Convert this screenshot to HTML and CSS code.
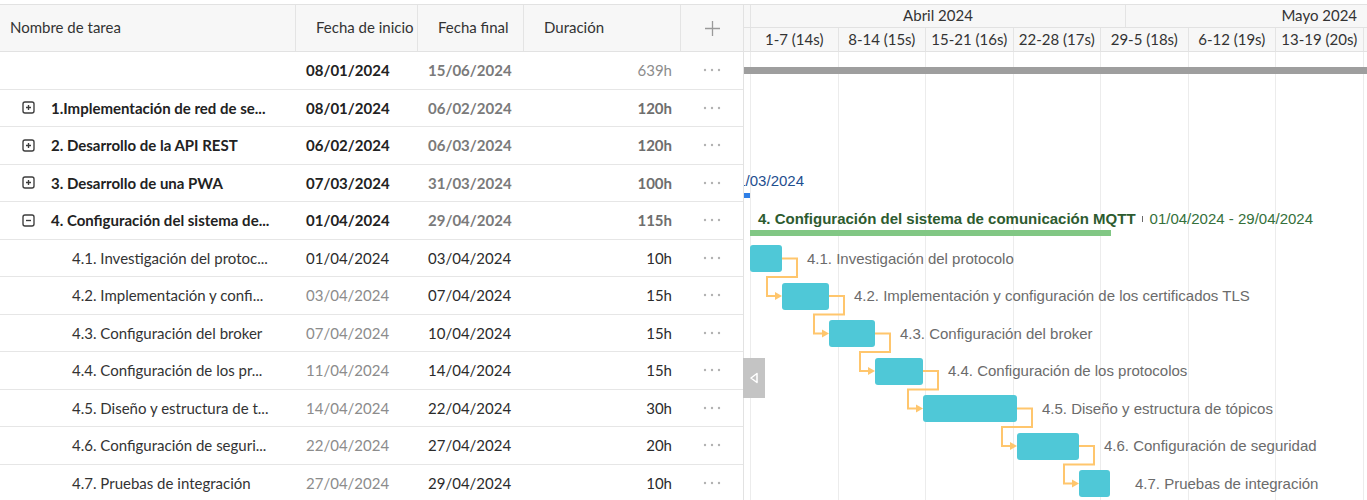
FILE: index.html
```html
<!DOCTYPE html>
<html lang="es">
<head>
<meta charset="utf-8">
<title>Gantt</title>
<link rel="stylesheet" href="styles.css">
</head>
<body>
<div class="app">
  <div class="grid">
    <div class="head">
      <div class="hc col-name">Nombre de tarea</div>
      <div class="hc col-start">Fecha de inicio</div>
      <div class="hc col-end">Fecha final</div>
      <div class="hc col-dur">Duración</div>
      <div class="hc col-add"><svg width="17" height="17" viewBox="0 0 17 17"><path d="M8.5 1v15M1 8.5h15" stroke="#9a9a9a" stroke-width="1.3" fill="none"/></svg></div>
    </div>
    <div class="body">
      <div class="row">
        <div class="cell col-name"></div>
        <div class="cell col-start b dark">08/01/2024</div>
        <div class="cell col-end b grey">15/06/2024</div>
        <div class="cell col-dur light">639h</div>
        <div class="cell col-add"><svg class="dots" width="18" height="4" viewBox="0 0 18 4"><circle cx="2" cy="2" r="1.2"/><circle cx="9" cy="2" r="1.2"/><circle cx="16" cy="2" r="1.2"/></svg></div>
      </div>
      <div class="row">
        <div class="cell col-name parent"><svg class="tog" width="13" height="13" viewBox="0 0 13 13"><rect x="1" y="1" width="11" height="11" rx="2"/><path d="M4 6.5h5M6.5 4v5"/></svg><span class="b dark">1.Implementación de red de se...</span></div>
        <div class="cell col-start b dark">08/01/2024</div>
        <div class="cell col-end b grey">06/02/2024</div>
        <div class="cell col-dur b mid">120h</div>
        <div class="cell col-add"><svg class="dots" width="18" height="4" viewBox="0 0 18 4"><circle cx="2" cy="2" r="1.2"/><circle cx="9" cy="2" r="1.2"/><circle cx="16" cy="2" r="1.2"/></svg></div>
      </div>
      <div class="row">
        <div class="cell col-name parent"><svg class="tog" width="13" height="13" viewBox="0 0 13 13"><rect x="1" y="1" width="11" height="11" rx="2"/><path d="M4 6.5h5M6.5 4v5"/></svg><span class="b dark">2. Desarrollo de la API REST</span></div>
        <div class="cell col-start b dark">06/02/2024</div>
        <div class="cell col-end b grey">06/03/2024</div>
        <div class="cell col-dur b mid">120h</div>
        <div class="cell col-add"><svg class="dots" width="18" height="4" viewBox="0 0 18 4"><circle cx="2" cy="2" r="1.2"/><circle cx="9" cy="2" r="1.2"/><circle cx="16" cy="2" r="1.2"/></svg></div>
      </div>
      <div class="row">
        <div class="cell col-name parent"><svg class="tog" width="13" height="13" viewBox="0 0 13 13"><rect x="1" y="1" width="11" height="11" rx="2"/><path d="M4 6.5h5M6.5 4v5"/></svg><span class="b dark">3. Desarrollo de una PWA</span></div>
        <div class="cell col-start b dark">07/03/2024</div>
        <div class="cell col-end b grey">31/03/2024</div>
        <div class="cell col-dur b mid">100h</div>
        <div class="cell col-add"><svg class="dots" width="18" height="4" viewBox="0 0 18 4"><circle cx="2" cy="2" r="1.2"/><circle cx="9" cy="2" r="1.2"/><circle cx="16" cy="2" r="1.2"/></svg></div>
      </div>
      <div class="row">
        <div class="cell col-name parent"><svg class="tog" width="13" height="13" viewBox="0 0 13 13"><rect x="1" y="1" width="11" height="11" rx="2"/><path d="M4 6.5h5"/></svg><span class="b dark">4. Configuración del sistema de...</span></div>
        <div class="cell col-start b dark">01/04/2024</div>
        <div class="cell col-end b grey">29/04/2024</div>
        <div class="cell col-dur b mid">115h</div>
        <div class="cell col-add"><svg class="dots" width="18" height="4" viewBox="0 0 18 4"><circle cx="2" cy="2" r="1.2"/><circle cx="9" cy="2" r="1.2"/><circle cx="16" cy="2" r="1.2"/></svg></div>
      </div>
      <div class="row">
        <div class="cell col-name child">4.1. Investigación del protoc...</div>
        <div class="cell col-start">01/04/2024</div>
        <div class="cell col-end">03/04/2024</div>
        <div class="cell col-dur">10h</div>
        <div class="cell col-add"><svg class="dots" width="18" height="4" viewBox="0 0 18 4"><circle cx="2" cy="2" r="1.2"/><circle cx="9" cy="2" r="1.2"/><circle cx="16" cy="2" r="1.2"/></svg></div>
      </div>
      <div class="row">
        <div class="cell col-name child">4.2. Implementación y confi...</div>
        <div class="cell col-start light">03/04/2024</div>
        <div class="cell col-end">07/04/2024</div>
        <div class="cell col-dur">15h</div>
        <div class="cell col-add"><svg class="dots" width="18" height="4" viewBox="0 0 18 4"><circle cx="2" cy="2" r="1.2"/><circle cx="9" cy="2" r="1.2"/><circle cx="16" cy="2" r="1.2"/></svg></div>
      </div>
      <div class="row">
        <div class="cell col-name child">4.3. Configuración del broker</div>
        <div class="cell col-start light">07/04/2024</div>
        <div class="cell col-end">10/04/2024</div>
        <div class="cell col-dur">15h</div>
        <div class="cell col-add"><svg class="dots" width="18" height="4" viewBox="0 0 18 4"><circle cx="2" cy="2" r="1.2"/><circle cx="9" cy="2" r="1.2"/><circle cx="16" cy="2" r="1.2"/></svg></div>
      </div>
      <div class="row">
        <div class="cell col-name child">4.4. Configuración de los pr...</div>
        <div class="cell col-start light">11/04/2024</div>
        <div class="cell col-end">14/04/2024</div>
        <div class="cell col-dur">15h</div>
        <div class="cell col-add"><svg class="dots" width="18" height="4" viewBox="0 0 18 4"><circle cx="2" cy="2" r="1.2"/><circle cx="9" cy="2" r="1.2"/><circle cx="16" cy="2" r="1.2"/></svg></div>
      </div>
      <div class="row">
        <div class="cell col-name child">4.5. Diseño y estructura de t...</div>
        <div class="cell col-start light">14/04/2024</div>
        <div class="cell col-end">22/04/2024</div>
        <div class="cell col-dur">30h</div>
        <div class="cell col-add"><svg class="dots" width="18" height="4" viewBox="0 0 18 4"><circle cx="2" cy="2" r="1.2"/><circle cx="9" cy="2" r="1.2"/><circle cx="16" cy="2" r="1.2"/></svg></div>
      </div>
      <div class="row">
        <div class="cell col-name child">4.6. Configuración de seguri...</div>
        <div class="cell col-start light">22/04/2024</div>
        <div class="cell col-end">27/04/2024</div>
        <div class="cell col-dur">20h</div>
        <div class="cell col-add"><svg class="dots" width="18" height="4" viewBox="0 0 18 4"><circle cx="2" cy="2" r="1.2"/><circle cx="9" cy="2" r="1.2"/><circle cx="16" cy="2" r="1.2"/></svg></div>
      </div>
      <div class="row">
        <div class="cell col-name child">4.7. Pruebas de integración</div>
        <div class="cell col-start light">27/04/2024</div>
        <div class="cell col-end">29/04/2024</div>
        <div class="cell col-dur">10h</div>
        <div class="cell col-add"><svg class="dots" width="18" height="4" viewBox="0 0 18 4"><circle cx="2" cy="2" r="1.2"/><circle cx="9" cy="2" r="1.2"/><circle cx="16" cy="2" r="1.2"/></svg></div>
      </div>
    </div>
  </div>

  <div class="chart">
    <div class="chart-head">
      <div class="scale months">
        <div class="tcell pad"></div>
        <div class="tcell m-apr">Abril 2024</div>
        <div class="tcell m-may">Mayo 2024</div>
      </div>
      <div class="scale weeks">
        <div class="tcell pad"></div>
        <div class="tcell wk">1-7 (14s)</div>
        <div class="tcell wk">8-14 (15s)</div>
        <div class="tcell wk">15-21 (16s)</div>
        <div class="tcell wk">22-28 (17s)</div>
        <div class="tcell wk">29-5 (18s)</div>
        <div class="tcell wk">6-12 (19s)</div>
        <div class="tcell wk">13-19 (20s)</div>
        <div class="tcell wk"></div>
      </div>
    </div>
    <div class="chart-body">
      <div class="cols">
        <div class="col pad"></div>
        <div class="col"></div><div class="col"></div><div class="col"></div><div class="col"></div>
        <div class="col"></div><div class="col"></div><div class="col"></div><div class="col"></div>
      </div>
      <svg class="links" width="623" height="450" viewBox="0 0 623 450">
        <g fill="none" stroke="#ffc66d" stroke-width="2">
          <path d="M38 206.5H53V225H23V244H32"/>
          <path d="M85 244H100V262.5H70V281.5H79"/>
          <path d="M131 281.5H146V300H116V319H125"/>
          <path d="M179 319H194V337.5H164V356.5H173"/>
          <path d="M273 356.5H288V375H258V394H267"/>
          <path d="M335 394H350V412.5H320V431.5H329"/>
        </g>
        <g fill="#ffc66d">
          <path d="M31 240L38 244L31 248Z"/>
          <path d="M78 277.5L85 281.5L78 285.5Z"/>
          <path d="M124 315L131 319L124 323Z"/>
          <path d="M172 352.5L179 356.5L172 360.5Z"/>
          <path d="M266 390L273 394L266 398Z"/>
          <path d="M328 427.5L335 431.5L328 435.5Z"/>
        </g>
      </svg>
      <div class="trow"><div class="sbar gray"></div></div>
      <div class="trow"></div>
      <div class="trow"></div>
      <div class="trow">
        <div class="plabel blue-label"><span>31/03/2024</span></div>
        <div class="sbar blue"></div>
      </div>
      <div class="trow">
        <div class="plabel green-label"><b>4. Configuración del sistema de comunicación MQTT</b><i class="tick"></i><span>01/04/2024 - 29/04/2024</span></div>
        <div class="sbar green"></div>
      </div>
      <div class="trow"><div class="bar" style="left:6px;width:32px"></div><div class="label" style="left:63px">4.1. Investigación del protocolo</div></div>
      <div class="trow"><div class="bar" style="left:38px;width:47px"></div><div class="label" style="left:110px">4.2. Implementación y configuración de los certificados TLS</div></div>
      <div class="trow"><div class="bar" style="left:85px;width:46px"></div><div class="label" style="left:156px">4.3. Configuración del broker</div></div>
      <div class="trow"><div class="bar" style="left:131px;width:48px"></div><div class="label" style="left:204px">4.4. Configuración de los protocolos</div></div>
      <div class="trow"><div class="bar" style="left:179px;width:94px"></div><div class="label" style="left:298px">4.5. Diseño y estructura de tópicos</div></div>
      <div class="trow"><div class="bar" style="left:273px;width:62px"></div><div class="label" style="left:360px">4.6. Configuración de seguridad</div></div>
      <div class="trow"><div class="bar" style="left:335px;width:31px"></div><div class="label" style="left:391px">4.7. Pruebas de integración</div></div>
    </div>
  </div>

  <div class="collapse"><svg width="10" height="12" viewBox="0 0 10 12"><path d="M8 1.5L2 6L8 10.5Z" fill="none" stroke="#fff" stroke-width="1.5" stroke-linejoin="round"/></svg></div>
</div>
</body>
</html>
```

FILE: styles.css
```css
html, body {
  margin: 0;
  padding: 0;
  overflow: hidden;
  background: #fff;
}
body {
  font-family: Lato, "Noto Sans", sans-serif;
  font-size: 15px;
  color: #333;
}
.app {
  display: flex;
  position: relative;
  margin-top: 4px;
  border-top: 1px solid #e2e2e2;
  height: 495px;
}

/* ---------- grid ---------- */
.grid {
  width: 744px;
  flex-shrink: 0;
  box-sizing: border-box;
  border-right: 1px solid #e2e2e2;
}
.head {
  display: flex;
  height: 47px;
  box-sizing: border-box;
  border-bottom: 1px solid #e2e2e2;
  background: #f7f7f7;
}
.hc {
  box-sizing: border-box;
  display: flex;
  align-items: center;
  padding-left: 20px;
  padding-bottom: 3px;
  border-right: 1px solid #e4e4e4;
  color: #333;
  white-space: nowrap;
}
.hc.col-name { padding-left: 10px; }
.hc.col-add { padding-left: 0; padding-bottom: 0; justify-content: center; border-right: none; }

.col-name { width: 296px; }
.col-start { width: 122px; }
.col-end { width: 106px; }
.col-dur { width: 157px; }
.col-add { width: 62px; }

.row {
  display: flex;
  align-items: center;
  height: 37.5px;
  box-sizing: border-box;
  border-bottom: 1px solid #e6e6e6;
}
.cell {
  box-sizing: border-box;
  white-space: nowrap;
  overflow: hidden;
  color: #2b2b2b;
}
.row .col-start, .row .col-end { padding-left: 10px; }
.row .col-dur { text-align: right; padding-right: 9px; }
.row .col-add { display: flex; justify-content: center; }
.row .col-name.parent {
  display: flex;
  align-items: center;
  padding-left: 22px;
}
.row .col-name.child { padding-left: 72px; color: #333; }
.tog {
  flex-shrink: 0;
  margin-right: 16px;
  fill: none;
  stroke: #3c3c3c;
  stroke-width: 1.35;
}
.dots { fill: #b2b2b2; }

.b { font-weight: 700; }
.dark { color: #222; }
.grey { color: #7a7a7a; }
.mid { color: #6e6e6e; }
.light { color: #8c8c8c; }

/* ---------- chart ---------- */
.chart {
  flex: 1;
  min-width: 0;
  overflow: hidden;
  position: relative;
}
.chart-head { background: #f7f7f7; }
.scale {
  display: flex;
  box-sizing: border-box;
  border-bottom: 1px solid #e2e2e2;
}
.months { height: 23px; }
.weeks { height: 24px; }
.tcell {
  flex-shrink: 0;
  box-sizing: border-box;
  border-left: 1px solid #e4e4e4;
  display: flex;
  align-items: center;
  justify-content: center;
  white-space: nowrap;
  color: #333;
}
.months .tcell { padding-bottom: 3px; }
.weeks .tcell { padding-bottom: 2px; }
.tcell.pad { width: 6px; border-left: none; }
.tcell.wk { width: 87.5px; }
.tcell.m-apr { width: 375px; }
.tcell.m-may { width: 387.5px; }

.chart-body {
  position: relative;
  height: 450px;
}
.cols {
  position: absolute;
  inset: 0;
  display: flex;
}
.col {
  flex-shrink: 0;
  width: 87.5px;
  box-sizing: border-box;
  border-left: 1px solid #ececec;
}
.col.pad { width: 6px; border-left: none; }
.links {
  position: absolute;
  left: 0;
  top: 0;
}
.trow {
  position: relative;
  height: 37.5px;
}
.bar {
  position: absolute;
  top: 5.5px;
  height: 27px;
  background: #4fc8d7;
  border-radius: 3px;
}
.label {
  position: absolute;
  top: 0;
  height: 100%;
  display: flex;
  align-items: center;
  white-space: nowrap;
  font-family: "Liberation Sans", Arial, sans-serif;
  font-size: 15px;
  color: #6b6b6b;
}
.sbar { position: absolute; }
.sbar.gray { left: 0; right: 0; top: 15px; height: 7px; background: #9e9e9e; }
.sbar.blue { left: -120px; width: 126px; top: 28.5px; height: 5px; background: #2f7fe6; }
.sbar.green { left: 6px; width: 361px; top: 28px; height: 6px; background: #81c784; }

.plabel {
  position: absolute;
  top: 6px;
  height: 20px;
  display: flex;
  align-items: center;
  white-space: nowrap;
  font-family: "Liberation Sans", Arial, sans-serif;
  font-size: 15px;
}
.plabel b { font-weight: 700; }
.tick {
  display: inline-block;
  width: 1px;
  height: 6px;
  margin: 2px 7px 0 6px;
  background: #6a6a6a;
}
.blue-label { right: calc(100% - 60px); color: #1f4f8f; }
.green-label { left: 14px; }
.green-label b { color: #2d5b2f; }
.green-label span { color: #35703b; }

.collapse {
  position: absolute;
  left: 743px;
  top: 353px;
  width: 22px;
  height: 40px;
  background: #c4c4c4;
  display: flex;
  align-items: center;
  justify-content: center;
}
```
